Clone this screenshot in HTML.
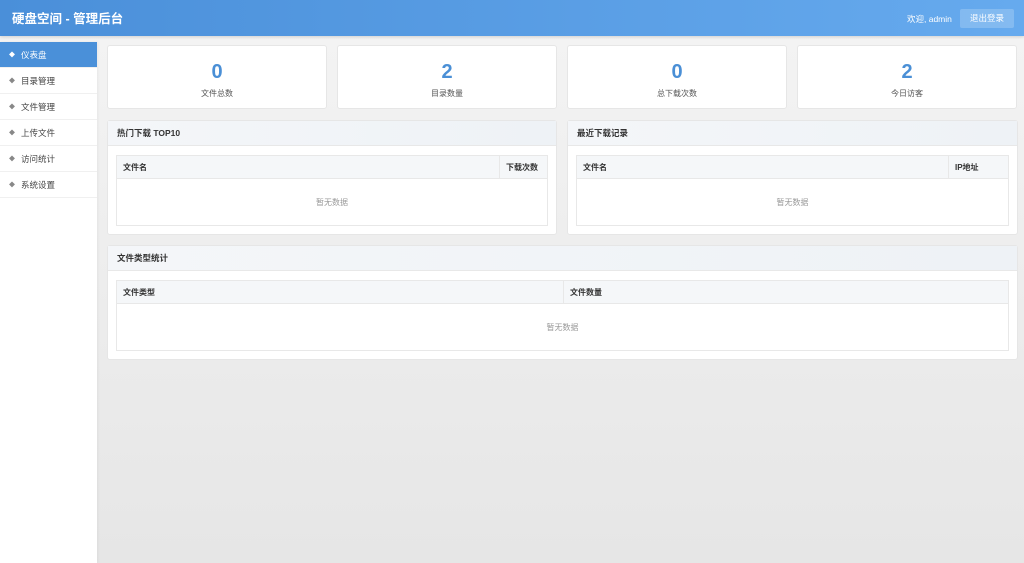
<!DOCTYPE html>
<html><head><meta charset="utf-8"><style>
*{margin:0;padding:0;box-sizing:border-box}
body{width:1024px;height:563px;overflow:hidden;font-family:"Liberation Sans","Noto Sans CJK SC",sans-serif;background:linear-gradient(#f4f4f4,#e6e6e6);position:relative;color:#333}
.hdr{position:absolute;left:0;top:0;width:1024px;height:36px;background:linear-gradient(90deg,#4a8fd9,#66aaee);box-shadow:0 1px 3px rgba(0,0,0,.15)}
.hdr h1{position:absolute;left:12px;top:8px;font-size:12.5px;color:#fff;font-weight:bold}
.hdr .w{position:absolute;left:907px;top:13px;font-size:8.5px;color:#fff}
.hdr .b{position:absolute;left:960px;top:9px;width:54px;height:19px;background:rgba(255,255,255,.2);border-radius:2px;color:#fff;font-size:8.5px;text-align:center;line-height:19px}
.side{position:absolute;left:0;top:42px;width:97px;height:521px;background:#fff;box-shadow:1px 0 3px rgba(0,0,0,.05)}
.side div{height:26px;line-height:26px;font-size:8.5px;color:#444;padding-left:9px;border-bottom:1px solid #f0f0f0}
.side div:before{content:"◆";font-size:6px;color:#888;margin-right:6px;vertical-align:1px}
.side .a{background:#4a90d9;color:#fff}
.side .a:before{color:#fff}
.card{position:absolute;top:45px;height:64px;width:220px;background:#fff;border:1px solid #e6e6e6;border-radius:3px;text-align:center}
.card b{display:block;font-size:20px;font-weight:bold;color:#4a8fd6;margin-top:15px;line-height:22px}
.card span{font-size:8px;color:#555}
.pan{position:absolute;background:#fff;border:1px solid #e6e6e6;border-radius:3px}
.pan .ph{height:25px;background:linear-gradient(90deg,#f4f6f9,#eef2f6);border-bottom:1px solid #e8e8e8;font-size:8.5px;font-weight:bold;line-height:25px;padding-left:9px}
.tb{position:absolute;border:1px solid #e8e8e8;background:#fff}
.tb .th{height:23px;background:#f5f7f9;border-bottom:1px solid #e8e8e8;position:relative;font-size:8px;font-weight:bold;line-height:23px}
.tb .th span{position:absolute;top:0;padding-left:6px;padding-right:6px}
.tb .e{text-align:center;font-size:8px;color:#999;line-height:47px}
</style></head><body>
<div class="hdr"><h1>硬盘空间 - 管理后台</h1><span class="w">欢迎, admin</span><span class="b">退出登录</span></div>
<div class="side"><div class="a">仪表盘</div><div>目录管理</div><div>文件管理</div><div>上传文件</div><div>访问统计</div><div>系统设置</div></div>
<div class="card" style="left:107px"><b>0</b><span>文件总数</span></div>
<div class="card" style="left:337px"><b>2</b><span>目录数量</span></div>
<div class="card" style="left:567px"><b>0</b><span>总下载次数</span></div>
<div class="card" style="left:797px"><b>2</b><span>今日访客</span></div>
<div class="pan" style="left:107px;top:120px;width:450px;height:115px"><div class="ph">热门下载 TOP10</div>
<div class="tb" style="left:8px;top:34px;width:432px;height:71px"><div class="th"><span style="left:0">文件名</span><span style="left:382px;border-left:1px solid #e8e8e8;height:22px">下载次数</span></div><div class="e">暂无数据</div></div></div>
<div class="pan" style="left:567px;top:120px;width:451px;height:115px"><div class="ph">最近下载记录</div>
<div class="tb" style="left:8px;top:34px;width:433px;height:71px"><div class="th"><span style="left:0">文件名</span><span style="left:371px;border-left:1px solid #e8e8e8;height:22px;width:61px">IP地址</span></div><div class="e">暂无数据</div></div></div>
<div class="pan" style="left:107px;top:245px;width:911px;height:115px"><div class="ph">文件类型统计</div>
<div class="tb" style="left:8px;top:34px;width:893px;height:71px"><div class="th"><span style="left:0">文件类型</span><span style="left:446px;border-left:1px solid #e8e8e8;height:22px">文件数量</span></div><div class="e">暂无数据</div></div></div>
</body></html>
